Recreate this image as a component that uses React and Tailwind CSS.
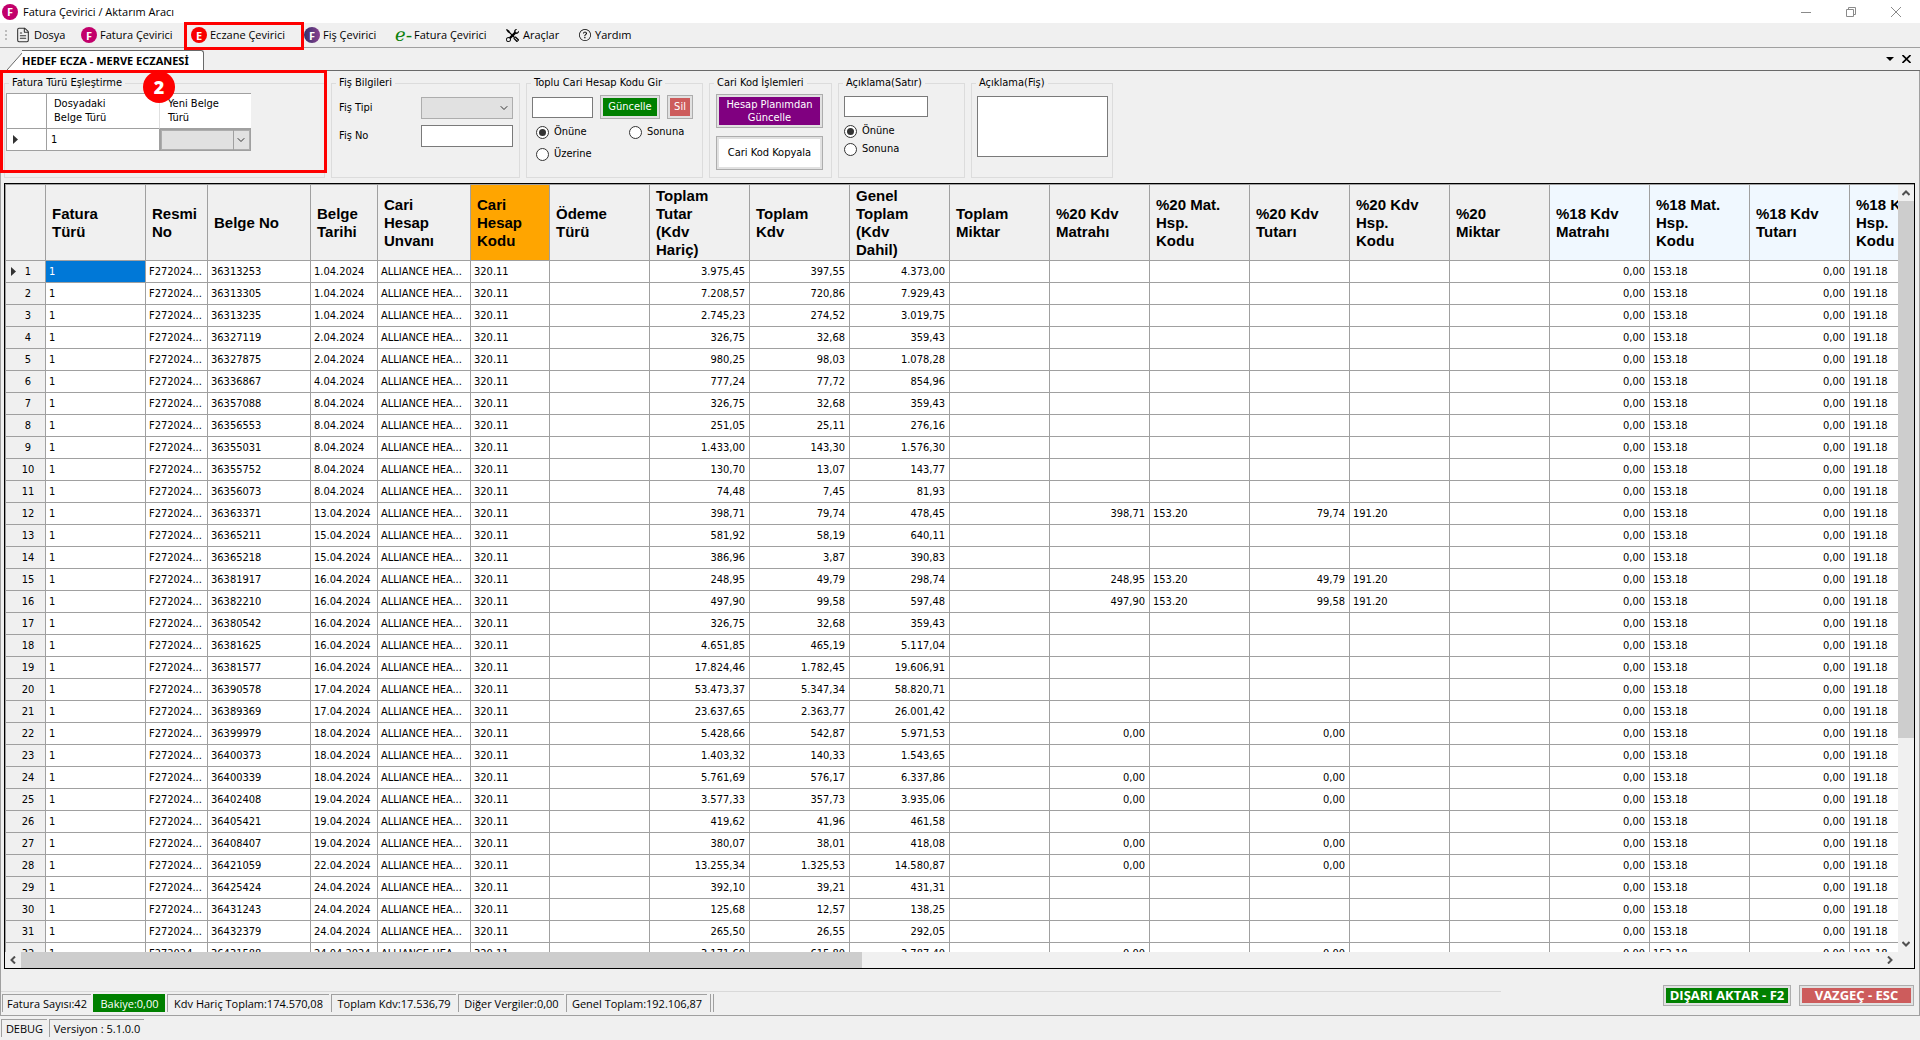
import { useState } from "react";
import clsx from "clsx";
import { ChevronDown, FileText } from "lucide-react";
import { BsQuestionCircle, BsTools } from "react-icons/bs";

const columns = [
  { key: "type", title: "Fatura Türü", lines: ["Fatura", "Türü"], width: "w-[100px]" },
  { key: "official", title: "Resmi No", lines: ["Resmi", "No"], width: "w-[62px]" },
  { key: "no", title: "Belge No", lines: ["Belge No"], width: "w-[103px]" },
  { key: "date", title: "Belge Tarihi", lines: ["Belge", "Tarihi"], width: "w-[67px]" },
  { key: "name", title: "Cari Hesap Unvanı", lines: ["Cari", "Hesap", "Unvanı"], width: "w-[93px]" },
  { key: "code", title: "Cari Hesap Kodu", lines: ["Cari", "Hesap", "Kodu"], width: "w-[79px]", bg: "bg-[#ffa500]" },
  { key: "payment", title: "Ödeme Türü", lines: ["Ödeme", "Türü"], width: "w-[100px]" },
  { key: "net", title: "Toplam Tutar", lines: ["Toplam", "Tutar", "(Kdv", "Hariç)"], width: "w-[100px]", right: true },
  { key: "vat", title: "Toplam Kdv", lines: ["Toplam", "Kdv"], width: "w-[100px]", right: true },
  { key: "gross", title: "Genel Toplam", lines: ["Genel", "Toplam", "(Kdv", "Dahil)"], width: "w-[100px]", right: true },
  { key: "qty", title: "Toplam Miktar", lines: ["Toplam", "Miktar"], width: "w-[100px]", right: true },
  { key: "base20", title: "%20 Kdv Matrahı", lines: ["%20 Kdv", "Matrahı"], width: "w-[100px]", right: true },
  { key: "baseCode20", title: "%20 Mat. Hsp. Kodu", lines: ["%20 Mat.", "Hsp.", "Kodu"], width: "w-[100px]" },
  { key: "vat20", title: "%20 Kdv Tutarı", lines: ["%20 Kdv", "Tutarı"], width: "w-[100px]", right: true },
  { key: "vatCode20", title: "%20 Kdv Hsp. Kodu", lines: ["%20 Kdv", "Hsp.", "Kodu"], width: "w-[100px]" },
  { key: "qty20", title: "%20 Miktar", lines: ["%20", "Miktar"], width: "w-[100px]", right: true },
  { key: "base18", title: "%18 Kdv Matrahı", lines: ["%18 Kdv", "Matrahı"], width: "w-[100px]", bg: "bg-[#f0f8ff]", right: true },
  { key: "baseCode18", title: "%18 Mat. Hsp. Kodu", lines: ["%18 Mat.", "Hsp.", "Kodu"], width: "w-[100px]", bg: "bg-[#f0f8ff]" },
  { key: "vat18", title: "%18 Kdv Tutarı", lines: ["%18 Kdv", "Tutarı"], width: "w-[100px]", bg: "bg-[#f0f8ff]", right: true },
  { key: "vatCode18", title: "%18 Kdv Hsp. Kodu", lines: ["%18 Kdv", "Hsp.", "Kodu"], width: "w-[100px]", bg: "bg-[#f0f8ff]" },
];

// no, date, net, vat, gross, base20, vat20
const invoices = [
  ["36313253", "1.04.2024", "3.975,45", "397,55", "4.373,00"],
  ["36313305", "1.04.2024", "7.208,57", "720,86", "7.929,43"],
  ["36313235", "1.04.2024", "2.745,23", "274,52", "3.019,75"],
  ["36327119", "2.04.2024", "326,75", "32,68", "359,43"],
  ["36327875", "2.04.2024", "980,25", "98,03", "1.078,28"],
  ["36336867", "4.04.2024", "777,24", "77,72", "854,96"],
  ["36357088", "8.04.2024", "326,75", "32,68", "359,43"],
  ["36356553", "8.04.2024", "251,05", "25,11", "276,16"],
  ["36355031", "8.04.2024", "1.433,00", "143,30", "1.576,30"],
  ["36355752", "8.04.2024", "130,70", "13,07", "143,77"],
  ["36356073", "8.04.2024", "74,48", "7,45", "81,93"],
  ["36363371", "13.04.2024", "398,71", "79,74", "478,45", "398,71", "79,74"],
  ["36365211", "15.04.2024", "581,92", "58,19", "640,11"],
  ["36365218", "15.04.2024", "386,96", "3,87", "390,83"],
  ["36381917", "16.04.2024", "248,95", "49,79", "298,74", "248,95", "49,79"],
  ["36382210", "16.04.2024", "497,90", "99,58", "597,48", "497,90", "99,58"],
  ["36380542", "16.04.2024", "326,75", "32,68", "359,43"],
  ["36381625", "16.04.2024", "4.651,85", "465,19", "5.117,04"],
  ["36381577", "16.04.2024", "17.824,46", "1.782,45", "19.606,91"],
  ["36390578", "17.04.2024", "53.473,37", "5.347,34", "58.820,71"],
  ["36389369", "17.04.2024", "23.637,65", "2.363,77", "26.001,42"],
  ["36399979", "18.04.2024", "5.428,66", "542,87", "5.971,53", "0,00", "0,00"],
  ["36400373", "18.04.2024", "1.403,32", "140,33", "1.543,65"],
  ["36400339", "18.04.2024", "5.761,69", "576,17", "6.337,86", "0,00", "0,00"],
  ["36402408", "19.04.2024", "3.577,33", "357,73", "3.935,06", "0,00", "0,00"],
  ["36405421", "19.04.2024", "419,62", "41,96", "461,58"],
  ["36408407", "19.04.2024", "380,07", "38,01", "418,08", "0,00", "0,00"],
  ["36421059", "22.04.2024", "13.255,34", "1.325,53", "14.580,87", "0,00", "0,00"],
  ["36425424", "24.04.2024", "392,10", "39,21", "431,31"],
  ["36431243", "24.04.2024", "125,68", "12,57", "138,25"],
  ["36432379", "24.04.2024", "265,50", "26,55", "292,05"],
  ["36431588", "24.04.2024", "3.171,60", "615,80", "3.787,40", "0,00", "0,00"],
].map(([no, date, net, vat, gross, base20 = "", vat20 = ""]) => {
  const has20 = base20 !== "" && base20 !== "0,00";
  return {
    type: "1",
    official: "F272024...",
    no,
    date,
    name: "ALLIANCE HEA...",
    code: "320.11",
    net,
    vat,
    gross,
    base20,
    baseCode20: has20 ? "153.20" : "",
    vat20,
    vatCode20: has20 ? "191.20" : "",
    base18: "0,00",
    baseCode18: "153.18",
    vat18: "0,00",
    vatCode18: "191.18",
  };
});

const totals = [
  { text: "Fatura Sayısı:42", width: "w-[89px]" },
  { text: "Bakiye:0,00", width: "w-[72px]", green: true },
  { text: "Kdv Hariç Toplam:174.570,08", width: "w-[162px]" },
  { text: "Toplam Kdv:17.536,79", width: "w-[125px]" },
  { text: "Diğer Vergiler:0,00", width: "w-[106px]" },
  { text: "Genel Toplam:192.106,87", width: "w-[141px]" },
];

const LetterBadge = ({ letter, className }) => (
  <span
    className={clsx(
      "flex size-4 shrink-0 items-center justify-center rounded-full font-['Open_Sans',sans-serif] text-[11px] leading-none font-bold text-white",
      className
    )}
  >
    {letter}
  </span>
);

const MenuItem = ({ icon, label, className }) => (
  <button type="button" className={clsx("flex h-6 shrink-0 items-center gap-[3px] whitespace-nowrap", className)}>
    {icon}
    {label}
  </button>
);

const TitleBar = () => (
  <header className="flex h-[23px] items-center bg-white pl-[2px]">
    <LetterBadge letter="F" className="bg-[#c2006b]" />
    <h1 className="ml-[5px] flex-1">Fatura Çevirici / Aktarım Aracı</h1>
    <button type="button" aria-label="Küçült" className="flex w-[45px] justify-center text-[#8a8a8a]">
      <svg width="10" height="10" viewBox="0 0 10 10" stroke="currentColor">
        <path d="M0 5.5h10" />
      </svg>
    </button>
    <button type="button" aria-label="Geri yükle" className="flex w-[45px] justify-center text-[#8a8a8a]">
      <svg width="10" height="10" viewBox="0 0 10 10" fill="none" stroke="currentColor">
        <path d="M.5 2.5h7v7h-7zM2.5 2.5v-2h7v7h-2" />
      </svg>
    </button>
    <button type="button" aria-label="Kapat" className="mr-[2px] flex w-[45px] justify-center text-[#8a8a8a]">
      <svg width="10" height="10" viewBox="0 0 10 10" stroke="currentColor">
        <path d="M0 0l10 10M10 0L0 10" />
      </svg>
    </button>
  </header>
);

const MenuBar = () => (
  <nav className="relative flex h-6 items-center pl-[5px]">
    <span className="mr-2 flex flex-col gap-[2px]">
      <i className="size-[2px] bg-[#bcbcbc]" />
      <i className="size-[2px] bg-[#bcbcbc]" />
      <i className="size-[2px] bg-[#bcbcbc]" />
    </span>
    <MenuItem
      className="w-[66px]"
      label="Dosya"
      icon={<FileText size={16} strokeWidth={1.6} className="text-[#333]" />}
    />
    <MenuItem className="w-[110px]" label="Fatura Çevirici" icon={<LetterBadge letter="F" className="bg-[#c2006b]" />} />
    <MenuItem className="w-[113px]" label="Eczane Çevirici" icon={<LetterBadge letter="E" className="bg-[#f80000]" />} />
    <MenuItem
      className="w-[91px]"
      label="Fiş Çevirici"
      icon={<LetterBadge letter="F" className="bg-linear-to-r from-[#33306b] to-[#8a3f8f]" />}
    />
    <MenuItem
      className="w-[111px]"
      label="Fatura Çevirici"
      icon={<span className="w-4 font-['DejaVu_Sans',sans-serif] text-lg leading-none text-[#0a800a]">ℯ-</span>}
    />
    <MenuItem className="w-[73px]" label="Araçlar" icon={<BsTools size={13} className="mr-px" />} />
    <MenuItem label="Yardım" icon={<BsQuestionCircle size={12} className="mr-px" />} />
    <span className="pointer-events-none absolute top-[-1px] left-[184px] h-7 w-[120px] border-[3px] border-[#fe0000]" />
  </nav>
);

const TabStrip = () => (
  <div className="flex h-6 items-end border-t border-b border-t-[#a0a0a0] border-b-[#696969] pl-[7px]">
    <div className="flex h-5 items-stretch">
      <svg width="19" height="20" viewBox="0 0 19 20" className="text-[#696969]">
        <path d="M0 20L16 2L19 .5V20z" fill="#fff" />
        <path d="M0 20L16 2L19 .5" fill="none" stroke="currentColor" />
      </svg>
      <button
        type="button"
        className="-ml-1 w-[182px] rounded-tr-[3px] border-t border-r border-[#696969] bg-white text-left font-['Noto_Sans',sans-serif] text-[11px] font-bold whitespace-nowrap"
      >
        HEDEF ECZA - MERVE ECZANESİ
      </button>
    </div>
    <div className="ml-auto flex h-full items-center gap-2 pr-[9px]">
      <button type="button" aria-label="Sekmeler">
        <svg width="8" height="4" viewBox="0 0 8 4">
          <path d="M0 0h8L4 4z" />
        </svg>
      </button>
      <button type="button" aria-label="Sekmeyi kapat">
        <svg width="9" height="8" viewBox="0 0 9 8" stroke="#000" strokeWidth="1.6">
          <path d="M.5 0l8 8M8.500 0l-8 8" />
        </svg>
      </button>
    </div>
  </div>
);

const Group = ({ title, className, children }) => (
  <fieldset className={clsx("h-[101px] shrink-0 border border-[#dcdcdc]", className)}>
    <legend className="ml-1 px-[3px] leading-3 whitespace-nowrap">{title}</legend>
    {children}
  </fieldset>
);

const Radio = ({ label, className, ...props }) => (
  <label className={clsx("flex items-center gap-[5px]", className)}>
    <input
      type="radio"
      className="size-[13px] shrink-0 appearance-none rounded-full border border-[#333] bg-white p-[2px] after:block after:size-full after:rounded-full checked:after:bg-[#333]"
      {...props}
    />
    {label}
  </label>
);

const Select = ({ label, className, ...props }) => (
  <span className={clsx("relative block", className)}>
    <select aria-label={label} className="block h-full w-full appearance-none border border-[#adadad] bg-[#e1e1e1]" {...props}>
      <option value="" />
    </select>
    <ChevronDown size={12} className="pointer-events-none absolute top-1/2 right-[3px] -translate-y-1/2 text-[#333]" />
  </span>
);

const PushButton = ({ color, className, children }) => (
  <button type="button" className={clsx("border border-[#adadad] bg-[#e1e1e1] p-[2px]", className)}>
    <span className={clsx("flex h-full items-center justify-center", color)}>{children}</span>
  </button>
);

const inputClass = "border border-[#7a7a7a] bg-white px-1 outline-none";

const Toolbar = () => {
  const [codeMode, setCodeMode] = useState("prefix");
  const [noteMode, setNoteMode] = useState("prefix");

  return (
    <section className="relative flex h-28 items-start gap-[6px] pt-[6px] pl-[3px] font-['DejaVu_Sans_Condensed','Noto_Sans',sans-serif] text-[11px] leading-[14px]">
      <Group title="Fatura Türü Eşleştirme" className="w-[321px]">
        <table className="mt-1 ml-px table-fixed border-separate border-spacing-0 border-t border-l border-[#a0a0a0] bg-white text-left">
          <thead>
            <tr className="h-[35px]">
              <th className="w-10 border-r border-b border-[#a0a0a0]" />
              <th className="w-[113px] border-r border-b border-[#a0a0a0] border-r-[#e0e0e0] pl-[7px] font-normal">
                Dosyadaki
                <br />
                Belge Türü
              </th>
              <th className="w-[91px] border-b border-[#a0a0a0] pl-2 font-normal">
                Yeni Belge
                <br />
                Türü
              </th>
            </tr>
          </thead>
          <tbody>
            <tr className="h-[22px]">
              <td className="border-r border-b border-[#a0a0a0] pl-[6px]">
                <svg width="5" height="9" viewBox="0 0 5 9" fill="#333">
                  <path d="M0 0l5 4.500L0 9z" />
                </svg>
              </td>
              <td className="border-r border-b border-[#a0a0a0] pl-1">1</td>
              <td className="h-[22px] p-0">
                <div className="relative flex h-[22px] border border-[#a0a0a0] bg-[#e1e1e1]">
                  <Select label="Yeni Belge Türü" className="h-full flex-1" />
                  <span className="pointer-events-none absolute inset-y-0 right-4 w-px bg-[#a0a0a0]" />
                </div>
              </td>
            </tr>
          </tbody>
        </table>
      </Group>

      <Group title="Fiş Bilgileri" className="w-[189px]">
        <div className="grid grid-cols-[82px_92px] items-center gap-y-[6px] pt-2 pl-[7px]">
          <label htmlFor="fis-tipi">Fiş Tipi</label>
          <Select id="fis-tipi" className="h-[22px]" />
          <label htmlFor="fis-no">Fiş No</label>
          <input id="fis-no" className={clsx("h-[22px]", inputClass)} />
        </div>
      </Group>

      <Group title="Toplu Cari Hesap Kodu Gir" className="w-[177px]">
        <div className="flex items-center gap-[7px] pt-[6px] pl-[5px]">
          <input aria-label="Cari hesap kodu" className={clsx("h-[21px] w-[61px]", inputClass)} />
          <PushButton className="h-6 w-[60px] text-white" color="bg-[#008000]">
            Güncelle
          </PushButton>
          <PushButton className="h-6 w-[26px] text-white" color="bg-[#cd5c5c]">
            Sil
          </PushButton>
        </div>
        <div className="grid grid-cols-[93px_1fr] gap-y-2 pt-[6px] pl-[9px]">
          <Radio name="code" label="Önüne" checked={codeMode === "prefix"} onChange={() => setCodeMode("prefix")} />
          <Radio name="code" label="Sonuna" checked={codeMode === "suffix"} onChange={() => setCodeMode("suffix")} />
          <Radio name="code" label="Üzerine" checked={codeMode === "replace"} onChange={() => setCodeMode("replace")} />
        </div>
      </Group>

      <Group title="Cari Kod İşlemleri" className="w-[123px]">
        <div className="flex flex-col gap-2 pt-[5px] pl-[6px]">
          <PushButton className="h-[34px] w-[107px] leading-[13px] text-white" color="bg-[#800080]">
            Hesap Planımdan
            <br />
            Güncelle
          </PushButton>
          <PushButton className="h-[34px] w-[107px]" color="bg-white">
            Cari Kod Kopyala
          </PushButton>
        </div>
      </Group>

      <Group title="Açıklama(Satır)" className="w-[127px]">
        <div className="flex flex-col items-start pt-[7px] pl-[5px]">
          <input aria-label="Satır açıklaması" className={clsx("h-[21px] w-[84px]", inputClass)} />
          <Radio className="mt-[7px]" name="note" label="Önüne" checked={noteMode === "prefix"} onChange={() => setNoteMode("prefix")} />
          <Radio className="mt-1" name="note" label="Sonuna" checked={noteMode === "suffix"} onChange={() => setNoteMode("suffix")} />
        </div>
      </Group>

      <Group title="Açıklama(Fiş)" className="w-[142px]">
        <textarea aria-label="Fiş açıklaması" className={clsx("mt-[7px] ml-[5px] block h-[61px] w-[131px] resize-none", inputClass)} />
      </Group>

      <span className="pointer-events-none absolute top-[-1px] left-[-1px] h-[103px] w-[327px] border-[3px] border-[#fe0000]" />
      <span className="absolute top-0 left-[142px] flex size-8 items-center justify-center rounded-full bg-[#fe0000] font-['Open_Sans',sans-serif] text-lg leading-none font-extrabold text-white">
        2
      </span>
    </section>
  );
};

const InvoiceTable = () => (
  <table className="w-[1944px] table-fixed border-separate border-spacing-0 bg-white font-['DejaVu_Sans_Condensed','Noto_Sans',sans-serif] text-[11px] leading-[14px]">
    <thead>
      <tr className="h-[76px] bg-[#f0f0f0] font-['Liberation_Sans',Arial,sans-serif] text-[15px] leading-[18px]">
        <th className="w-10 border-r border-b border-[#a0a0a0]" />
        {columns.map((col) => (
          <th
            key={col.key}
            title={col.title}
            className={clsx("border-r border-b border-[#a0a0a0] p-0 pl-[6px] text-left font-bold whitespace-nowrap", col.width, col.bg)}
          >
            {col.lines.map((line) => (
              <span key={line} className="block">
                {line}
              </span>
            ))}
          </th>
        ))}
      </tr>
    </thead>
    <tbody>
      {invoices.map((row, index) => (
        <tr key={row.no} className="h-[22px]">
          <th className="border-r border-b border-[#a0a0a0] bg-[#f0f0f0] p-0 font-normal">
            <span className="flex items-center pl-[5px]">
              <svg width="5" height="9" viewBox="0 0 5 9" className={index === 0 ? "fill-[#333]" : "fill-none"}>
                <path d="M0 0l5 4.500L0 9z" />
              </svg>
              <span className="w-6 text-center">{index + 1}</span>
            </span>
          </th>
          {columns.map((col) => (
            <td
              key={col.key}
              className={clsx(
                "overflow-hidden border-r border-b border-[#a0a0a0] p-0 whitespace-nowrap",
                col.right ? "pr-1 text-right" : "pl-[3px]",
                index === 0 && col.key === "type" && "bg-[#0078d7] text-white"
              )}
            >
              {row[col.key]}
            </td>
          ))}
        </tr>
      ))}
    </tbody>
  </table>
);

const Arrow = ({ label, className }) => (
  <button type="button" aria-label={label} className="flex size-4 shrink-0 items-center justify-center">
    <svg width="8" height="6" viewBox="0 0 8 6" fill="none" stroke="#505050" strokeWidth="2" className={className}>
      <path d="M.5 1L4 4.500L7.500 1" />
    </svg>
  </button>
);

const Grid = () => (
  <main className="mr-1 ml-[3px] flex min-h-0 flex-1 flex-col border border-black">
    <div className="flex min-h-0 flex-1 border-t border-l border-[#a0a0a0]">
      <div className="min-w-0 flex-1 overflow-hidden">
        <InvoiceTable />
      </div>
      <div className="flex w-4 flex-col items-center">
        <Arrow label="Yukarı" className="rotate-180" />
        <div className="flex min-h-0 w-full flex-1 flex-col">
          <div className="h-[73%] bg-[#cdcdcd]" />
        </div>
        <Arrow label="Aşağı" />
      </div>
    </div>
    <div className="flex h-4 pr-4">
      <Arrow label="Sola" className="rotate-90" />
      <div className="flex-1">
        <div className="h-full w-[45.2%] bg-[#cdcdcd]" />
      </div>
      <Arrow label="Sağa" className="-rotate-90" />
    </div>
  </main>
);

const StatusCell = ({ green, className, children }) => (
  <span
    className={clsx(
      "flex h-[18px] items-center justify-center border-t border-l whitespace-nowrap",
      green ? "border-[#008000] bg-[#008000] text-white" : "border-[#a0a0a0]",
      className
    )}
  >
    {children}
  </span>
);

const Footer = () => (
  <footer className="flex h-[47px] items-start justify-between border-b border-[#a0a0a0] pr-[5px]">
    <div className="mt-[22px] w-[1500px] border-t border-[#d9d9d9] pt-[2px] pl-px">
      <div className="flex gap-[2px]">
        {totals.map((item) => (
          <StatusCell key={item.text} green={item.green} className={item.width}>
            {item.text}
          </StatusCell>
        ))}
        <span className="ml-px h-[18px] w-1 border-x border-[#a0a0a0]" />
      </div>
    </div>
    <div className="flex gap-2 pt-4 text-[13px] font-bold text-white">
      <PushButton className="h-[21px] w-32 leading-none" color="bg-[#008000]">
        DIŞARI AKTAR - F2
      </PushButton>
      <PushButton className="h-[21px] w-[115px] leading-none" color="bg-[#cd5c5c]">
        VAZGEÇ - ESC
      </PushButton>
    </div>
  </footer>
);

const App = () => (
  <div className="flex h-screen flex-col overflow-hidden bg-[#f0f0f0] font-['Open_Sans','Noto_Sans',sans-serif] text-[11px] leading-4 text-black">
    <TitleBar />
    <MenuBar />
    <TabStrip />
    <div className="flex min-h-0 flex-1 flex-col border-x border-[#a0a0a0]">
      <Toolbar />
      <Grid />
      <Footer />
    </div>
    <div className="flex h-6 gap-[2px] pt-[3px] pl-px">
      <StatusCell className="w-[46px]">DEBUG</StatusCell>
      <StatusCell className="w-[95px]">Versiyon : 5.1.0.0</StatusCell>
    </div>
  </div>
);

export default App;
